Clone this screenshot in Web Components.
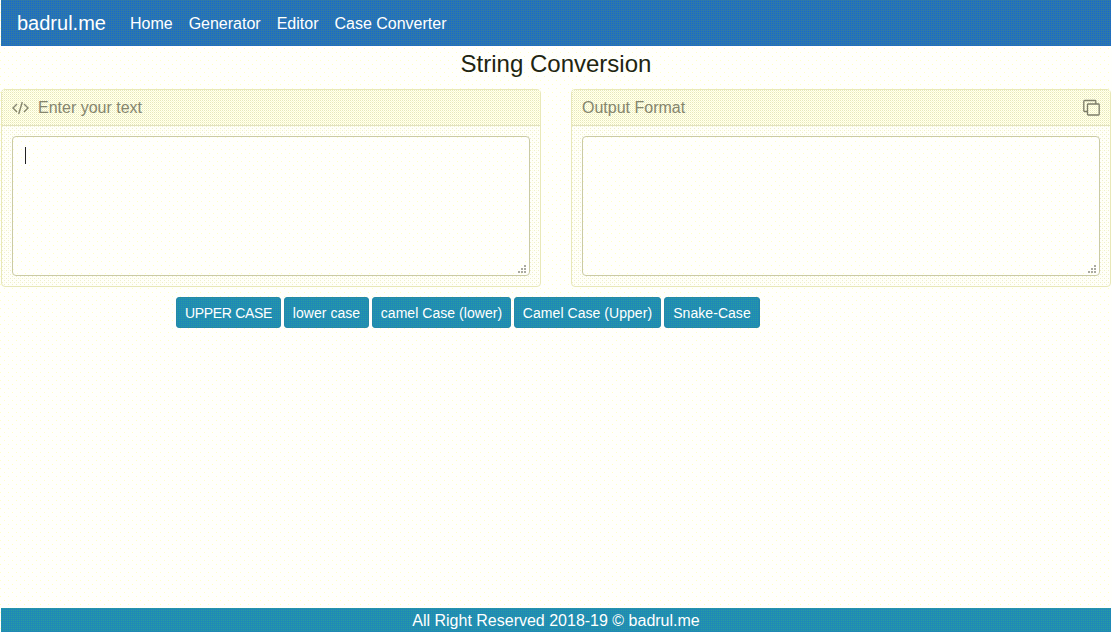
<!DOCTYPE html>
<html lang="en">
<head>
<meta charset="utf-8">
<title>String Conversion</title>
<style>
html,body{margin:0;height:100%;overflow:hidden}
body{font-family:"Liberation Sans",Arial,sans-serif;font-size:16px;line-height:24px;color:#212511}
</style>
</head>
<body>
<case-converter></case-converter>
<script>
// Repeating tile of single-pixel dots: cells are [colour, x, y].
const weave = (size, base, cells) => {
  const rects = cells.map(([c, x, y]) => `<rect x='${x}' y='${y}' width='1' height='1' fill='${c}'/>`).join('');
  const svg = `<svg xmlns='http://www.w3.org/2000/svg' width='${size}' height='${size}' shape-rendering='crispEdges'>${rects}</svg>`;
  return `url("data:image/svg+xml,${encodeURIComponent(svg).replace(/'/g, '%27')}") ${base}`;
};
const paper = weave(8, '#fffffc', [['#ffffc4',4,0],['#ffffc4',0,4]]);
const navy = weave(2, '#2872b8', [['#337f9c',0,0],['#1b6cc4',1,1]]);
const teal = weave(2, '#208eb0', [['#289aa4',0,0],['#1f84bc',1,1]]);

const define = (name, html) => customElements.define(name, class extends HTMLElement {
  constructor() {
    super();
    this.attachShadow({mode:'open'}).innerHTML = html;
  }
});

define('nav-bar', `<style>
:host{display:flex;align-items:center;box-sizing:border-box;height:46px;padding:0 16px;color:#fff;background:${navy}}
b{font-weight:400;font-size:20px;line-height:30px;margin-right:16px}
nav{display:flex;padding-top:2px}
::slotted(a){padding:0 8px}
</style><b>badrul.me</b><nav><slot></slot></nav>`);

define('text-panel', `<style>
:host{display:block;box-sizing:border-box;width:540px;height:198px;border:1px solid #e8e8b8;border-radius:4px;
background:${weave(4,'#fffffa',[['#eeeecc',0,0],['#eeeecc',2,2],['#ffffd8',2,0]])}}
header{display:flex;align-items:center;box-sizing:border-box;height:36px;padding:0 10px;border-bottom:1px solid #e2e2c0;color:#85856d;
background:${weave(2,'#fffff4',[['#e8e8b8',0,0],['#fbfbc8',1,1]])}}
.tail{margin-left:auto;height:18px}
.body{padding:10px}
.field{position:relative;box-sizing:border-box;height:140px;border:1px solid #cacaa4;border-radius:4px;padding:10px 12px;background:${paper}}
.grip{position:absolute;right:2px;bottom:1px;display:block}
::slotted(svg){display:block}
</style><header><slot name="icon"></slot><slot name="title"></slot><div class="tail"><slot name="action"></slot></div></header>
<div class="body"><div class="field"><slot></slot>
<svg class="grip" width="9" height="9" fill="#aaaaa0" shape-rendering="crispEdges"><path d="M6 0h2v2H6zM3 3h2v2H3zM6 3h2v2H6zM0 6h2v2H0zM3 6h2v2H3zM6 6h2v2H6z"/></svg></div></div>`);

define('text-caret', `<style>:host{display:block;width:1px;height:17px;background:#222}</style>`);

define('case-button', `<style>
:host{display:block;box-sizing:border-box;height:31px;padding:5px 0;border:1px solid #2587a8;border-radius:3px;color:#fff;font-size:14px;line-height:21px;white-space:nowrap;text-align:center;background:${teal}}
</style><slot></slot>`);

define('page-footer', `<style>
:host{display:block;box-sizing:border-box;height:24px;padding-top:1px;line-height:23px;text-align:center;color:#fff;background:${teal}}
</style><slot></slot>`);

define('case-converter', `<style>
:host{display:flex;flex-direction:column;box-sizing:border-box;width:1112px;height:632px;padding:0 1px;background:${paper}}
h1{font-size:24px;line-height:29px;font-weight:400;margin:3px 0 11px;text-align:center}
.panels{display:flex;justify-content:space-between}
.actions{display:grid;grid-template-columns:105px 85px 139px 147px 96px;gap:3px;padding:10px 0 0 175px}
.actions case-button{letter-spacing:.05px}
.actions case-button:first-child{letter-spacing:-.3px}
page-footer{margin-top:auto}
.label{margin-left:9px}
</style>
<nav-bar><a>Home</a><a>Generator</a><a>Editor</a><a>Case Converter</a></nav-bar>
<h1>String Conversion</h1>
<section class="panels">
<text-panel>
<svg slot="icon" width="17" height="16" viewBox="0 0 17 16" fill="none" stroke="#85856d" stroke-width="1.4"><path d="M5 4 1 8l4 4M12 4l4 4-4 4M10.3 2 6.7 14"/></svg>
<span slot="title" class="label">Enter your text</span><text-caret></text-caret>
</text-panel>
<text-panel><span slot="title">Output Format</span>
<svg slot="action" width="17" height="18" viewBox="0 0 17 18" fill="none" stroke="#7c7c68" stroke-width="1.3"><path d="M4.5 12.5H1.6a.8.8 0 0 1-.8-.8V2.3a.8.8 0 0 1 .8-.8H12a.8.8 0 0 1 .8.8V5"/><rect x="4.5" y="5" width="11.7" height="11" rx=".8"/></svg>
</text-panel>
</section>
<div class="actions"><case-button>UPPER CASE</case-button><case-button>lower case</case-button><case-button>camel Case (lower)</case-button><case-button>Camel Case (Upper)</case-button><case-button>Snake-Case</case-button></div>
<page-footer>All Right Reserved 2018-19 © badrul.me</page-footer>`);
</script>
</body>
</html>
